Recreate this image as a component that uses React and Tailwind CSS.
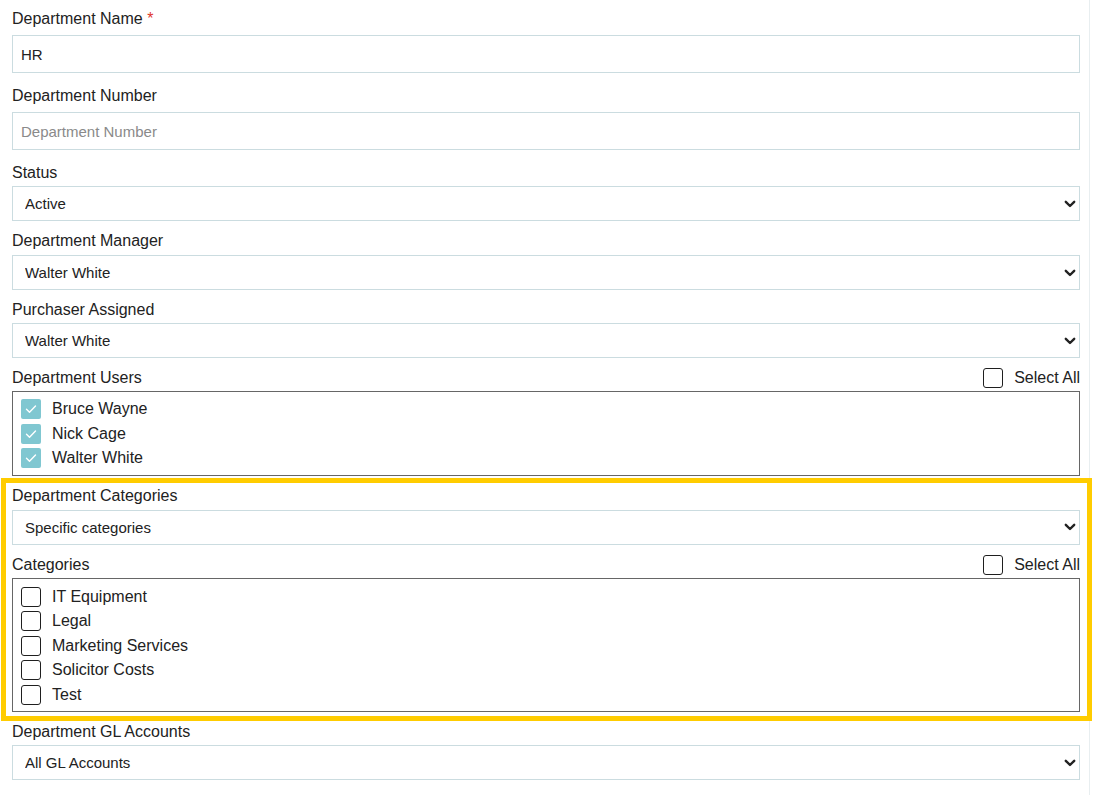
import { useState } from "react";

const users = [
  { id: 1, name: "Bruce Wayne", checked: true },
  { id: 2, name: "Nick Cage", checked: true },
  { id: 3, name: "Walter White", checked: true },
];

const categories = [
  { id: 1, name: "IT Equipment" },
  { id: 2, name: "Legal" },
  { id: 3, name: "Marketing Services" },
  { id: 4, name: "Solicitor Costs" },
  { id: 5, name: "Test" },
];

function Box({ checked, onClick }) {
  if (checked) {
    return (
      <span
        onClick={onClick}
        className="flex h-[20px] w-[20px] shrink-0 items-center justify-center rounded-[2px] bg-[#80c7d1] cursor-pointer"
      >
        <svg width="14" height="14" viewBox="0 0 14 14" fill="none">
          <path d="M2.5 7.2l3 3 6-6.2" stroke="#fff" strokeWidth="1.4" strokeLinecap="round" strokeLinejoin="round" />
        </svg>
      </span>
    );
  }
  return (
    <span
      onClick={onClick}
      className="block h-[20px] w-[20px] shrink-0 rounded-[3px] border border-[#1f1f1f] bg-white cursor-pointer"
    />
  );
}

function Label({ children, className = "" }) {
  return <label className={"block text-[16px] leading-[18px] text-[#222] " + className}>{children}</label>;
}

function Select({ value, options, className = "" }) {
  return (
    <div className={"relative " + className}>
      <select
        defaultValue={value}
        className="block h-[35px] w-full appearance-none border border-[#cbdce0] bg-white pl-[12px] pr-8 pt-[2px] text-[15px] text-[#222] outline-none"
      >
        {options.map((o) => (
          <option key={o}>{o}</option>
        ))}
      </select>
      <svg
        className="pointer-events-none absolute right-[4px] top-1/2 -translate-y-1/2"
        width="12"
        height="8"
        viewBox="0 0 12 8"
        fill="none"
      >
        <path d="M1.8 1.8L6 6l4.2-4.2" stroke="#222" strokeWidth="2.4" strokeLinecap="round" strokeLinejoin="round" />
      </svg>
    </div>
  );
}

function CheckHeader({ title, all, onAll, className = "" }) {
  return (
    <div className={"flex h-[24px] items-center justify-between " + className}>
      <span className="text-[16px] leading-[18px] text-[#222]">{title}</span>
      <div className="flex items-center gap-[11px]">
        <Box checked={all} onClick={onAll} />
        <span className="text-[16px] leading-[18px] text-[#222]">Select All</span>
      </div>
    </div>
  );
}

export default function App() {
  const [userState, setUserState] = useState(users);
  const [catState, setCatState] = useState(categories.map((c) => ({ ...c, checked: false })));

  const toggle = (list, setList, id) =>
    setList(list.map((i) => (i.id === id ? { ...i, checked: !i.checked } : i)));

  return (
    <div className="min-h-[795px] w-[1090px] border-r border-[#e8eef0] bg-white pl-[12px] pr-[9px] pt-[10px] font-['Liberation_Sans',Arial,sans-serif]">
      {/* Department Name */}
      <Label>
        Department Name <span className="text-[#e0362c]">*</span>
      </Label>
      <input
        defaultValue="HR"
        className="mt-[7px] block h-[38px] w-full border border-[#cbdce0] px-[8px] text-[15px] text-[#222] outline-none"
      />

      <Label className="mt-[14px]">Department Number</Label>
      <input
        placeholder="Department Number"
        className="mt-[7px] block h-[38px] w-full border border-[#cbdce0] px-[8px] text-[15px] text-[#222] placeholder:text-[#8a8a8a] outline-none"
      />

      <Label className="mt-[14px]">Status</Label>
      <Select className="mt-[4px]" value="Active" options={["Active", "Inactive"]} />

      <Label className="mt-[11px]">Department Manager</Label>
      <Select className="mt-[5px]" value="Walter White" options={["Walter White", "Bruce Wayne", "Nick Cage"]} />

      <Label className="mt-[11px]">Purchaser Assigned</Label>
      <Select className="mt-[4px]" value="Walter White" options={["Walter White", "Bruce Wayne", "Nick Cage"]} />

      <CheckHeader
        className="mt-[8px]"
        title="Department Users"
        all={false}
        onAll={() => setUserState(userState.map((u) => ({ ...u, checked: true })))}
      />
      <div className="mt-[1px] border border-[#666] pb-[4px] pl-[8px] pt-[5px]">
        {userState.map((u) => (
          <div key={u.id} className="flex h-[24.5px] items-center gap-[11px]">
            <Box checked={u.checked} onClick={() => toggle(userState, setUserState, u.id)} />
            <span className="text-[16px] leading-[18px] text-[#222]">{u.name}</span>
          </div>
        ))}
      </div>

      {/* highlighted section */}
      <div className="-ml-[11px] -mr-[12px] mt-[2px] border-[5px] border-[#ffcc00] pb-[4px] pl-[6px] pr-[7px] pt-[4px]">
        <Label>Department Categories</Label>
        <Select className="mt-[5px]" value="Specific categories" options={["All categories", "Specific categories"]} />

        <CheckHeader
          className="mt-[8px]"
          title="Categories"
          all={false}
          onAll={() => setCatState(catState.map((c) => ({ ...c, checked: true })))}
        />
        <div className="mt-[1px] border border-[#666] pb-[4px] pl-[8px] pt-[6px]">
          {catState.map((c) => (
            <div key={c.id} className="flex h-[24.5px] items-center gap-[11px]">
              <Box checked={c.checked} onClick={() => toggle(catState, setCatState, c.id)} />
              <span className="text-[16px] leading-[18px] text-[#222]">{c.name}</span>
            </div>
          ))}
        </div>
      </div>

      <Label className="mt-[2px]">Department GL Accounts</Label>
      <Select className="mt-[4px]" value="All GL Accounts" options={["All GL Accounts", "Specific GL Accounts"]} />
    </div>
  );
}
